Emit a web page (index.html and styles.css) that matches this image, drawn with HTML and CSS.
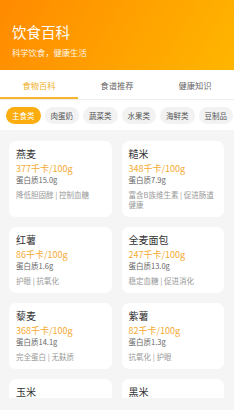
FILE: index.html
```html
<!DOCTYPE html>
<html>
<head>
    <meta charset="utf-8">
    <title>饮食百科</title>
    <link rel="stylesheet" href="styles.css">
</head>
<body>
    <!-- Header -->
    <div class="header">
        <div class="header-title">饮食百科</div>
        <div class="header-sub">科学饮食，健康生活</div>
    </div>

    <!-- Tabs -->
    <div class="tabs">
        <div class="tab active">食物百科</div>
        <div class="tab">食谱推荐</div>
        <div class="tab">健康知识</div>
    </div>

    <!-- Categories -->
    <div class="chips">
        <span class="chip active">主食类</span>
        <span class="chip">肉蛋奶</span>
        <span class="chip">蔬菜类</span>
        <span class="chip">水果类</span>
        <span class="chip">海鲜类</span>
        <span class="chip">豆制品</span>
    </div>

    <!-- Food cards -->
    <div class="food-scroll">
        <div class="food-grid">
            <div class="food-card">
                <div class="food-name">燕麦</div>
                <div class="food-cal">377千卡/100g</div>
                <div class="food-protein">蛋白质15.0g</div>
                <div class="food-tags">降低胆固醇 | 控制血糖</div>
            </div>
            <div class="food-card">
                <div class="food-name">糙米</div>
                <div class="food-cal">348千卡/100g</div>
                <div class="food-protein">蛋白质7.9g</div>
                <div class="food-tags">富含B族维生素 | 促进肠道健康</div>
            </div>
            <div class="food-card">
                <div class="food-name">红薯</div>
                <div class="food-cal">86千卡/100g</div>
                <div class="food-protein">蛋白质1.6g</div>
                <div class="food-tags">护眼 | 抗氧化</div>
            </div>
            <div class="food-card">
                <div class="food-name">全麦面包</div>
                <div class="food-cal">247千卡/100g</div>
                <div class="food-protein">蛋白质13.0g</div>
                <div class="food-tags">稳定血糖 | 促进消化</div>
            </div>
            <div class="food-card">
                <div class="food-name">藜麦</div>
                <div class="food-cal">368千卡/100g</div>
                <div class="food-protein">蛋白质14.1g</div>
                <div class="food-tags">完全蛋白 | 无麸质</div>
            </div>
            <div class="food-card">
                <div class="food-name">紫薯</div>
                <div class="food-cal">82千卡/100g</div>
                <div class="food-protein">蛋白质1.3g</div>
                <div class="food-tags">抗氧化 | 护眼</div>
            </div>
            <div class="food-card">
                <div class="food-name">玉米</div>
                <div class="food-cal">112千卡/100g</div>
                <div class="food-protein">蛋白质4.0g</div>
                <div class="food-tags">膳食纤维 | 护眼</div>
            </div>
            <div class="food-card">
                <div class="food-name">黑米</div>
                <div class="food-cal">341千卡/100g</div>
                <div class="food-protein">蛋白质9.4g</div>
                <div class="food-tags">补血 | 抗氧化</div>
            </div>
        </div>
    </div>
</body>
</html>
```

FILE: styles.css
```css
body {
    margin: 0;
    height: 100vh;
    overflow: hidden;
    background: #f5f5f5;
    font-family: "Noto Sans CJK SC", "Noto Sans", sans-serif;
    color: #333;
}

/* Header */
.header {
    height: 70px;
    box-sizing: border-box;
    padding: 22px 12px 0;
    background: linear-gradient(120deg, #ff8a00, #ffb600);
    color: white;
}

.header-title {
    font-size: 14.5px;
    line-height: 20px;
}

.header-sub {
    margin-top: 4px;
    font-size: 8.3px;
    line-height: 12px;
    opacity: 0.9;
}

/* Tabs */
.tabs {
    display: flex;
    height: 29px;
    background: white;
    border-bottom: 1px solid #eee;
}

.tab {
    flex: 1;
    position: relative;
    display: flex;
    align-items: center;
    justify-content: center;
    font-size: 8.3px;
    color: #666;
}

.tab.active {
    color: #f0b02c;
}

.tab.active::after {
    content: "";
    position: absolute;
    left: 0;
    right: 0;
    bottom: 0;
    height: 2px;
    background: #f5b52e;
}

/* Category chips */
.chips {
    display: flex;
    align-items: center;
    gap: 4px;
    height: 30px;
    padding: 0 6px;
    background: white;
    overflow: hidden;
    white-space: nowrap;
}

.chip {
    flex-shrink: 0;
    height: 17px;
    line-height: 17px;
    padding: 0 6px;
    border-radius: 9px;
    background: #f2f2f2;
    color: #555;
    font-size: 7.5px;
}

.chip.active {
    background: #fbac0e;
    color: white;
}

/* Food grid */
.food-scroll {
    height: 268px;
    overflow: hidden;
}

.food-grid {
    display: grid;
    grid-template-columns: 1fr 1fr;
    gap: 10px;
    padding: 11px 10px 0 9px;
}

.food-card {
    background: white;
    border-radius: 7px;
    padding: 6px 7px 7px;
}

.food-name {
    font-size: 10px;
    line-height: 14px;
    color: #333;
}

.food-cal {
    margin-top: 2px;
    font-size: 9px;
    line-height: 12px;
    color: #f5aa33;
}

.food-protein {
    font-size: 7.5px;
    line-height: 10px;
    color: #666;
}

.food-tags {
    margin-top: 5px;
    font-size: 7.5px;
    line-height: 10px;
    color: #999;
}
```
